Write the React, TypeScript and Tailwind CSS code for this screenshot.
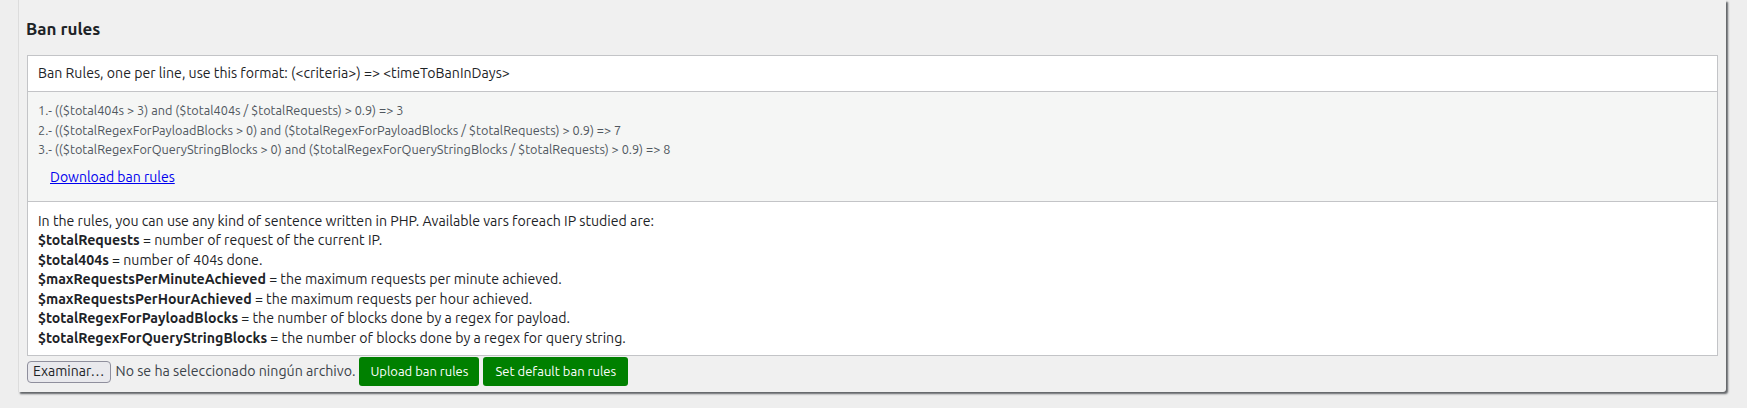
import React from "react";

const rules = [
  "1.- (($total404s > 3) and ($total404s / $totalRequests) > 0.9) => 3",
  "2.- (($totalRegexForPayloadBlocks > 0) and ($totalRegexForPayloadBlocks / $totalRequests) > 0.9) => 7",
  "3.- (($totalRegexForQueryStringBlocks > 0) and ($totalRegexForQueryStringBlocks / $totalRequests) > 0.9) => 8",
];

const vars: [string, string][] = [
  ["$totalRequests", " = number of request of the current IP."],
  ["$total404s", " = number of 404s done."],
  ["$maxRequestsPerMinuteAchieved", " = the maximum requests per minute achieved."],
  ["$maxRequestsPerHourAchieved", " = the maximum requests per hour achieved."],
  ["$totalRegexForPayloadBlocks", " = the number of blocks done by a regex for payload."],
  ["$totalRegexForQueryStringBlocks", " = the number of blocks done by a regex for query string."],
];

export default function App() {
  return (
    <div
      className="w-[1747px] h-[408px] bg-[#eeeeee] overflow-hidden text-[#1d2327]"
      style={{ fontFamily: "Ubuntu, 'Open Sans', 'Noto Sans', sans-serif" }}
    >
      <div className="ml-[18px] w-[1708px] h-[392px] bg-[#f0f0f0] border-l border-[#dcdcdc] rounded-br-[3px] shadow-[2px_2px_2px_#5f6266] flex flex-col px-[7px]">
        <h2 className="text-[17px] font-bold leading-none mt-[20px] mb-[18px] text-[#1d2327]">Ban rules</h2>
        <div className="border border-[#c3c4c7] bg-white ml-px mr-px">
          <div className="h-[36px] flex items-center px-[10px] text-[14.15px] border-b border-[#c3c4c7]">
            Ban Rules, one per line, use this format: (&lt;criteria&gt;) =&gt; &lt;timeToBanInDays&gt;
          </div>
          <div className="bg-[#f5f6f5] pt-[9px] pb-[14px] px-[10px] text-[12.7px] leading-[19.5px] text-[#50575e]">
            {rules.map((r) => (
              <div key={r}>{r}</div>
            ))}
            <div className="mt-[8px] ml-[12px] leading-[19px]">
              <a href="#" className="text-[14px] text-[#0000ee] underline">Download ban rules</a>
            </div>
          </div>
          <div className="border-t border-[#c3c4c7] pt-[10px] pb-[7px] px-[10px] text-[14.15px] leading-[19.5px] text-[#1d2327]">
            <div>In the rules, you can use any kind of sentence written in PHP. Available vars foreach IP studied are:</div>
            {vars.map(([k, v]) => (
              <div key={k}>
                <b className="font-bold">{k}</b>
                {v}
              </div>
            ))}
          </div>
        </div>
        <div className="flex items-center mt-[1px] ml-[1px] text-[14px]">
          <span className="h-[22px] px-[5px] flex items-center border border-[#8f8f9d] bg-[#e9e9ed] rounded-[4px] text-[#1d2327]">Examinar…</span>
          <span className="ml-[5px] text-[14.2px] text-[#3c434a]">No se ha seleccionado ningún archivo.</span>
          <button className="ml-[4px] h-[29px] px-[11px] bg-[#008000] text-white text-[13px] rounded-[3px]">Upload ban rules</button>
          <button className="ml-[4px] h-[29px] px-[12px] bg-[#008000] text-white text-[13px] rounded-[3px]">Set default ban rules</button>
        </div>
      </div>
    </div>
  );
}
